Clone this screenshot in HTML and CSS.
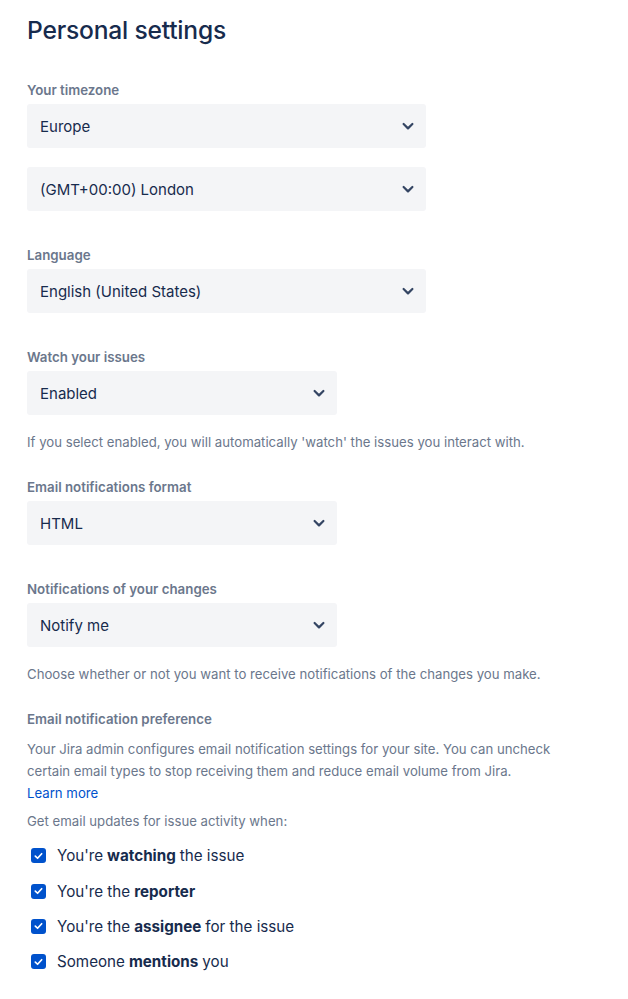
FILE: index.html
```html
<!DOCTYPE html>
<html>
<head>
<title>Personal settings</title>
<link rel="stylesheet" href="styles.css">
</head>
<body>

<div class="page">
    <h1>Personal settings</h1>

    <div class="field">
        <label class="label">Your timezone</label>
        <div class="select wide">
            <span>Europe</span>
            <svg class="chevron" width="24" height="24" viewBox="0 0 24 24"><path d="M7.6 10 12 14.4l4.4-4.4" fill="none" stroke="#344563" stroke-width="2.2" stroke-linecap="round" stroke-linejoin="round"/></svg>
        </div>
        <div class="select wide second">
            <span>(GMT+00:00) London</span>
            <svg class="chevron" width="24" height="24" viewBox="0 0 24 24"><path d="M7.6 10 12 14.4l4.4-4.4" fill="none" stroke="#344563" stroke-width="2.2" stroke-linecap="round" stroke-linejoin="round"/></svg>
        </div>
    </div>

    <div class="field">
        <label class="label">Language</label>
        <div class="select wide">
            <span>English (United States)</span>
            <svg class="chevron" width="24" height="24" viewBox="0 0 24 24"><path d="M7.6 10 12 14.4l4.4-4.4" fill="none" stroke="#344563" stroke-width="2.2" stroke-linecap="round" stroke-linejoin="round"/></svg>
        </div>
    </div>

    <div class="field">
        <label class="label">Watch your issues</label>
        <div class="select narrow">
            <span>Enabled</span>
            <svg class="chevron" width="24" height="24" viewBox="0 0 24 24"><path d="M7.6 10 12 14.4l4.4-4.4" fill="none" stroke="#344563" stroke-width="2.2" stroke-linecap="round" stroke-linejoin="round"/></svg>
        </div>
        <p class="help">If you select enabled, you will automatically 'watch' the issues you interact with.</p>
    </div>

    <div class="field">
        <label class="label">Email notifications format</label>
        <div class="select narrow">
            <span>HTML</span>
            <svg class="chevron" width="24" height="24" viewBox="0 0 24 24"><path d="M7.6 10 12 14.4l4.4-4.4" fill="none" stroke="#344563" stroke-width="2.2" stroke-linecap="round" stroke-linejoin="round"/></svg>
        </div>
    </div>

    <div class="field">
        <label class="label">Notifications of your changes</label>
        <div class="select narrow">
            <span>Notify me</span>
            <svg class="chevron" width="24" height="24" viewBox="0 0 24 24"><path d="M7.6 10 12 14.4l4.4-4.4" fill="none" stroke="#344563" stroke-width="2.2" stroke-linecap="round" stroke-linejoin="round"/></svg>
        </div>
        <p class="help">Choose whether or not you want to receive notifications of the changes you make.</p>
    </div>

    <div class="prefs">
        <label class="label">Email notification preference</label>
        <p class="text">Your Jira admin configures email notification settings for your site. You can uncheck certain email types to stop receiving them and reduce email volume from Jira.<br><a href="#">Learn more</a></p>
        <p class="text">Get email updates for issue activity when:</p>

        <ul class="checks">
            <li><span class="box"><svg width="16" height="16" viewBox="0 0 16 16"><path d="M4.6 8.2 7 10.4l4.4-4.8" fill="none" stroke="#fff" stroke-width="1.8" stroke-linecap="round" stroke-linejoin="round"/></svg></span>You're <b>watching</b> the issue</li>
            <li><span class="box"><svg width="16" height="16" viewBox="0 0 16 16"><path d="M4.6 8.2 7 10.4l4.4-4.8" fill="none" stroke="#fff" stroke-width="1.8" stroke-linecap="round" stroke-linejoin="round"/></svg></span>You're the <b>reporter</b></li>
            <li><span class="box"><svg width="16" height="16" viewBox="0 0 16 16"><path d="M4.6 8.2 7 10.4l4.4-4.8" fill="none" stroke="#fff" stroke-width="1.8" stroke-linecap="round" stroke-linejoin="round"/></svg></span>You're the <b>assignee</b> for the issue</li>
            <li><span class="box"><svg width="16" height="16" viewBox="0 0 16 16"><path d="M4.6 8.2 7 10.4l4.4-4.8" fill="none" stroke="#fff" stroke-width="1.8" stroke-linecap="round" stroke-linejoin="round"/></svg></span>Someone <b>mentions</b> you</li>
        </ul>
    </div>
</div>

</body>
</html>
```

FILE: styles.css
```css
body {
    margin: 0;
    background-color: #ffffff;
    font-family: Inter, "Noto Sans", Arial, sans-serif;
    color: #172b4d;
}
.page {
    padding: 14px 27px 0 27px;
}
h1 {
    margin: 0 0 36px 0;
    font-size: 24.6px;
    font-weight: 500;
    line-height: 32px;
    color: #172b4d;
    letter-spacing: -0.2px;
}
.field {
    margin-bottom: 36px;
}
.label {
    display: block;
    font-size: 13.3px;
    font-weight: 600;
    line-height: 16px;
    color: #6b778c;
    margin-bottom: 6px;
}
.select {
    display: flex;
    align-items: center;
    justify-content: space-between;
    box-sizing: border-box;
    height: 44px;
    padding: 0 6px 0 13px;
    background-color: #f4f5f7;
    border-radius: 3px;
    font-size: 15px;
    color: #172b4d;
}
.wide {
    width: 399px;
}
.narrow {
    width: 310px;
}
.second {
    margin-top: 19px;
}
.help {
    margin: 17px 0 -9px 0;
    font-size: 13.2px;
    line-height: 20px;
    color: #6b778c;
}
.prefs .label {
    margin-bottom: 11px;
}
.text {
    max-width: 540px;
    margin: 0 0 6px 0;
    font-size: 13.2px;
    line-height: 22px;
    color: #6b778c;
}
.text a {
    color: #0052cc;
    text-decoration: none;
}
.checks {
    list-style: none;
    margin: 6px 0 0 0;
    padding: 0 0 0 4px;
}
.checks li {
    display: flex;
    align-items: center;
    height: 35.4px;
    font-size: 15.2px;
    color: #172b4d;
}
.checks b {
    font-weight: 700;
    margin: 0 4px;
}
.box {
    display: inline-flex;
    align-items: center;
    justify-content: center;
    width: 15px;
    height: 15px;
    margin-right: 11px;
    background-color: #0052cc;
    border-radius: 3px;
}
```
